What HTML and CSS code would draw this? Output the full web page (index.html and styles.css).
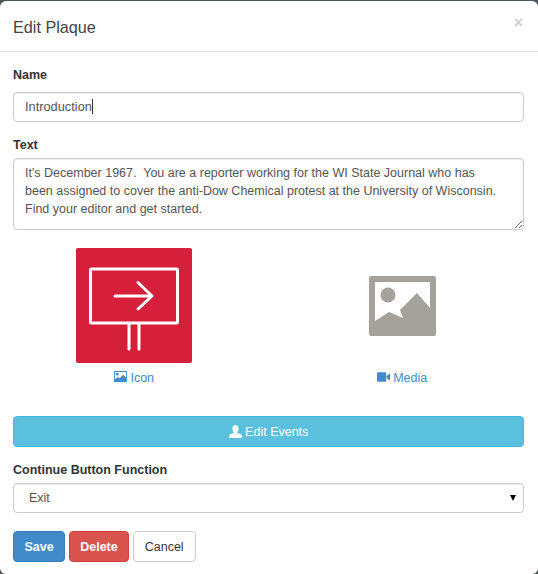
FILE: index.html
```html
<!DOCTYPE html>
<html lang="en">
  <head>
    <meta charset="UTF-8" />
    <title>Edit Plaque</title>
    <link rel="stylesheet" href="styles.css">
  </head>
  <body>
    <div class="modal">
      <header class="modal-header">
        <h4>Edit Plaque</h4>
        <span class="close">&times;</span>
      </header>
      <form class="modal-body">
        <label class="field-label">Name</label>
        <div class="form-control name-input">Introduction<span class="text-caret"></span></div>

        <label class="field-label text-label">Text</label>
        <textarea class="form-control text-input">It's December 1967.  You are a reporter working for the WI State Journal who has been assigned to cover the anti-Dow Chemical protest at the University of Wisconsin.  Find your editor and get started.</textarea>

        <div class="media-row">
          <div class="media-col">
            <svg class="thumb" viewBox="0 0 116 115">
              <rect width="116" height="115" rx="2" fill="#d61f3b" />
              <g fill="none" stroke="#fff" stroke-width="3" stroke-linecap="round" stroke-linejoin="round">
                <rect x="14.500" y="21" width="87" height="54" rx="1" />
                <path d="M39 48H76M62 34.500L76 48L62 61" />
                <path d="M53 76V101M63 76V101" />
              </g>
            </svg>
            <a class="media-link">
              <svg class="glyph" viewBox="0 0 14 12">
                <path fill-rule="evenodd" d="M0 0H14V12H0ZM1 1V9L4 6.500L6 8L10 4L13 7V1ZM3.500 2A1.500 1.500 0 1 0 3.501 5A1.500 1.500 0 1 0 3.500 2Z" />
              </svg>
              Icon
            </a>
          </div>
          <div class="media-col">
            <svg class="thumb" viewBox="0 0 116 115">
              <path fill="#a5a29b" fill-rule="evenodd" d="M27 28H90Q92 28 92 30V86Q92 88 90 88H27Q25 88 25 86V30Q25 28 27 28ZM31 34V73L45 64L59 70L56 62L73 45L86 60V34ZM44 39.500A7.500 7.500 0 1 0 44.010 54.500A7.500 7.500 0 1 0 44 39.500Z" />
            </svg>
            <a class="media-link">
              <svg class="glyph glyph-video" viewBox="0 0 14 10">
                <path d="M0 1Q0 0 1 0H9Q10 0 10 1V9Q10 10 9 10H1Q0 10 0 9ZM10.500 4L14 1V9L10.500 6Z" />
              </svg>
              Media
            </a>
          </div>
        </div>

        <button type="button" class="btn btn-info btn-block">
          <svg class="glyph glyph-user" viewBox="0 0 13 13">
            <path d="M6.500 0C8.500 0 9.600 1.500 9.600 3.500C9.600 5.200 8.900 6.400 8.300 7.200C8.300 8 9 8.300 10.500 8.800C12 9.300 13 10 13 11V13H0V11C0 10 1 9.300 2.500 8.800C4 8.300 4.700 8 4.700 7.200C4.100 6.400 3.400 5.200 3.400 3.500C3.400 1.500 4.500 0 6.500 0Z" />
          </svg>
          Edit Events
        </button>

        <label class="field-label function-label">Continue Button Function</label>
        <div class="select-wrap">
          <select class="form-control function-select">
            <option>Exit</option>
          </select>
          <span class="select-arrow"></span>
        </div>

        <div class="actions">
          <button type="button" class="btn btn-primary">Save</button>
          <button type="button" class="btn btn-danger">Delete</button>
          <button type="button" class="btn btn-default">Cancel</button>
        </div>
      </form>
    </div>
  </body>
</html>
```

FILE: styles.css
```css
html,
body {
  margin: 0;
  padding: 0;
  height: 574px;
  overflow: hidden;
}

body {
  background-color: #4d5559;
  font-family: "Liberation Sans", Arial, sans-serif;
  font-size: 12.500px;
  color: #333;
}

.modal {
  box-sizing: border-box;
  height: 573px;
  margin-top: 1px;
  background-color: white;
  border-radius: 6px;
}

.modal-header {
  box-sizing: border-box;
  height: 51px;
  padding: 0 15px 0 13px;
  border-bottom: 1px solid #e5e5e5;
  display: flex;
  justify-content: space-between;
}

.modal-header h4 {
  margin: 16px 0 0;
  font-size: 16.200px;
  font-weight: normal;
  line-height: 20px;
  color: #444;
}

.close {
  margin-top: 12px;
  font-size: 16px;
  font-weight: bold;
  line-height: 20px;
  color: #cfcfcf;
}

.modal-body {
  padding: 14px 14px 0 13px;
  display: flex;
  flex-direction: column;
}

.field-label {
  font-weight: bold;
  line-height: 18px;
  margin-bottom: 8px;
}

.form-control {
  box-sizing: border-box;
  width: 100%;
  padding: 5px 11px;
  font-family: inherit;
  font-size: 12.500px;
  line-height: 18px;
  color: #555;
  background-color: white;
  border: 1px solid #ccc;
  border-radius: 4px;
  box-shadow: inset 0 1px 1px rgba(0, 0, 0, 0.075);
}

.name-input {
  height: 30px;
  font-size: 12.800px;
}

.text-caret {
  display: inline-block;
  width: 1px;
  height: 15px;
  background-color: #333;
  vertical-align: -3px;
}

.text-label {
  margin-top: 14px;
  margin-bottom: 4px;
}

/* right padding keeps the line breaks where the original wraps */
.text-input {
  display: block;
  height: 72px;
  padding-right: 25px;
  resize: vertical;
}

/* row runs past the body padding, like a bootstrap .row */
.media-row {
  display: grid;
  grid-template-columns: 1fr 1fr;
  margin: 18px -12px 0 -13px;
}

.media-col {
  display: flex;
  flex-direction: column;
  align-items: center;
}

.thumb {
  display: block;
  width: 116px;
  height: 115px;
}

.media-link {
  margin-top: 6px;
  color: #428bca;
  line-height: 18px;
}

.glyph {
  width: 13px;
  height: 11px;
  fill: #428bca;
}

.glyph-video {
  height: 10px;
}

.glyph-user {
  width: 13px;
  height: 13px;
  fill: white;
  vertical-align: -2px;
}

.btn {
  box-sizing: border-box;
  height: 31px;
  padding: 0 11px;
  font-family: inherit;
  font-size: 12.500px;
  border: 1px solid transparent;
  border-radius: 4px;
  color: white;
}

.btn-block {
  width: 100%;
  margin-top: 29px;
}

.btn-info {
  background-color: #5bc0de;
  border-color: #46b8da;
}

.btn-primary {
  padding: 0 10.500px;
  background-color: #428bca;
  border-color: #357ebd;
  font-weight: bold;
}

.btn-danger {
  padding: 0 10px;
  background-color: #d9534f;
  border-color: #d43f3a;
  font-weight: bold;
}

.btn-default {
  background-color: white;
  border-color: #ccc;
  color: #333;
}

.function-label {
  margin-top: 14px;
  margin-bottom: 4px;
}

.select-wrap {
  position: relative;
}

.function-select {
  display: block;
  height: 30px;
  padding-left: 15px;
  appearance: none;
}

.select-arrow {
  position: absolute;
  top: 12px;
  right: 8px;
  border-style: solid;
  border-width: 6px 3.500px 0;
  border-color: black transparent transparent;
}

.actions {
  display: flex;
  gap: 4px;
  margin-top: 18px;
}
```
